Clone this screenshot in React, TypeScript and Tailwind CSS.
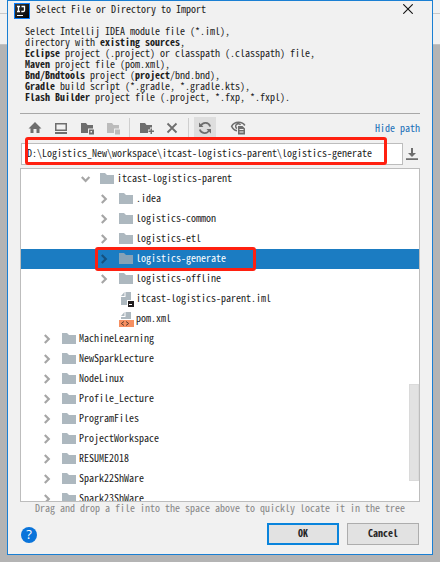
import type { ReactNode } from "react";

function Chevron({ open = false, selected = false }: { open?: boolean; selected?: boolean }) {
  return (
    <svg
      width={open ? 10 : 7}
      height={open ? 7 : 10}
      viewBox={open ? "0 0 10 7" : "0 0 7 10"}
      fill="none"
      stroke={selected ? "#15517f" : "#a6a6a6"}
      strokeWidth="2.2"
      className="shrink-0"
    >
      <path d={open ? "M0.8 1 L4.6 5 L8.4 1" : "M0.8 0.9 L4.8 5 L0.8 9.1"} />
    </svg>
  );
}

function Folder({ selected = false }: { selected?: boolean }) {
  return (
    <svg width="14" height="12" viewBox="0 0 14 12" className="shrink-0">
      <path d="M0 0H5L7 2H14V11H0Z" fill={selected ? "#86a2b7" : "#adb8bf"} />
    </svg>
  );
}

function ModuleFile() {
  return (
    <svg width="15" height="16" viewBox="0 0 15 16" className="shrink-0">
      <path d="M6.5 1H12V14H2V6H6.5Z" fill="#adb8bf" />
      <path d="M5.5 1V5H2Z" fill="#adb8bf" />
      <rect x="8" y="9" width="7" height="7" fill="#fff" />
      <rect x="9" y="10" width="6" height="6" fill="#231f20" />
      <rect x="10" y="13" width="3" height="1" fill="#fff" />
    </svg>
  );
}

function XmlFile() {
  return (
    <svg width="15" height="16" viewBox="0 0 15 16" className="shrink-0">
      <path d="M6.5 1H12V8H2V6H6.5Z" fill="#adb8bf" />
      <path d="M5.5 1V5H2Z" fill="#adb8bf" />
      <rect x="0" y="9" width="15" height="7" fill="#f68f61" />
      <path d="M5 10.5 L2.3 12.5 L5 14.5 M7 10.5 L9.7 12.5 L7 14.5" fill="none" stroke="#5e3b2c" strokeWidth="1" />
    </svg>
  );
}

interface Node {
  name: string;
  level: 1 | 2 | 3;
  kind?: "module" | "xml";
  selected?: boolean;
}

const nodes: Node[] = [
  { name: "itcast-logistics-parent", level: 2 },
  { name: ".idea", level: 3 },
  { name: "logistics-common", level: 3 },
  { name: "logistics-etl", level: 3 },
  { name: "logistics-generate", level: 3, selected: true },
  { name: "logistics-offline", level: 3 },
  { name: "itcast-logistics-parent.iml", level: 3, kind: "module" },
  { name: "pom.xml", level: 3, kind: "xml" },
  { name: "MachineLearning", level: 1 },
  { name: "NewSparkLecture", level: 1 },
  { name: "NodeLinux", level: 1 },
  { name: "Profile_Lecture", level: 1 },
  { name: "ProgramFiles", level: 1 },
  { name: "ProjectWorkspace", level: 1 },
  { name: "RESUME2018", level: 1 },
  { name: "Spark22ShWare", level: 1 },
  { name: "Spark23ShWare", level: 1 },
];

const indent = { 1: "pl-[22px]", 2: "pl-[60px]", 3: "pl-[79px]" };

function TreeRow({ node }: { node: Node }) {
  const sel = !!node.selected;
  return (
    <div
      className={`flex h-5 shrink-0 items-center ${indent[node.level]} ${sel ? "bg-[#1b7cc2] text-white" : "text-[#1c1c1c]"}`}
    >
      <div className="flex w-[19px] shrink-0 items-center">
        {!node.kind && (
          <span className={node.level === 2 ? "" : "pl-px"}>
            <Chevron open={node.level === 2} selected={sel} />
          </span>
        )}
      </div>
      <div className="flex w-[17px] shrink-0 items-center">
        {node.kind === "module" ? <ModuleFile /> : node.kind === "xml" ? <XmlFile /> : <Folder selected={sel} />}
      </div>
      <span className="pb-[3px]">{node.name}</span>
    </div>
  );
}

function Toolbar() {
  return (
    <div className="ml-3 mt-1 flex h-5 w-[400px] items-center">
      <svg width="230" height="20" viewBox="0 0 230 20" className="shrink-0 overflow-visible" fill="#6e6e6e">
        {/* home */}
        <path d="M15 4 L21.5 10.5 H19.5 V15 H16.5 V11 H13.5 V15 H10.5 V10.5 H8.5 Z" />
        {/* desktop */}
        <path d="M35 5H47V13H35Z M36.5 6.5V11.5H45.5V6.5Z M35 14H47V16H35Z" fillRule="evenodd" />
        {/* project directory */}
        <path d="M61 5H66L67.5 7H73V10.5H68V15H61Z" />
        <path d="M69 11.5H74V16.5H69Z M70.5 13V14.5H72V13Z" fillRule="evenodd" />
        {/* module directory */}
        <g fill="#bcbcbc">
          <path d="M87 5H92L93.5 7H99V10.5H94V15H87Z" />
          <path d="M95 11.5H100V16.5H95Z" />
        </g>
        <rect x="109" y="0" width="1" height="19" fill="#cfcfcf" />
        {/* new folder */}
        <path d="M120 5H125L126.5 7H132V9.5H130V11.5H128V15H120Z" />
        <path d="M130.5 10.5H132V12.5H134V14H132V16H130.5V14H128.5V12.5H130.5Z" />
        <path d="M147.5 5.5 L156.5 14.5 M156.5 5.5 L147.5 14.5" fill="none" stroke="#6e6e6e" strokeWidth="1.8" />
        <rect x="168" y="0" width="1" height="19" fill="#cfcfcf" />
        {/* refresh */}
        <rect x="174" y="-1" width="22" height="20" fill="#dedede" />
        <g fill="none" stroke="#6e6e6e" strokeWidth="1.8">
          <path d="M180.8 8 A5 5 0 0 1 190.2 8.5" />
          <path d="M189.2 12 A5 5 0 0 1 179.8 11.5" />
        </g>
        <path d="M179 4.5V9H183.5Z M191 15.5V11H186.5Z" />
        {/* show hidden files */}
        <g transform="translate(9 -0.5)">
          <path d="M215.8 8C213.5 3.8 205.5 3.2 202.6 8.8C204 12 206 13 208 13.2" fill="none" stroke="#6e6e6e" strokeWidth="1.6" />
          <path d="M208 11 A2.6 2.6 0 1 1 211.5 7.4" fill="none" stroke="#6e6e6e" strokeWidth="1.5" />
          <path d="M209 8.5H213.5L216 11V17H209Z M210.5 11.5V12.5H214.5V11.5Z M210.5 14V15H214.5V14Z" fillRule="evenodd" />
        </g>
      </svg>
      <span className="ml-auto pb-[2px] text-[#2070b8]">Hide path</span>
    </div>
  );
}

function DialogButton({ children, primary = false }: { children: ReactNode; primary?: boolean }) {
  return (
    <button
      className={`flex h-[22px] w-[72px] items-center justify-center bg-[#e2e2e2] pb-[3px] font-semibold text-[#262626] ${
        primary ? "border-2 border-[#0a84dc]" : "border border-[#adadad]"
      }`}
    >
      {children}
    </button>
  );
}

export default function App() {
  return (
    <div className="relative h-[562px] w-[440px] overflow-hidden bg-[#b4b4b4] pl-[7px] font-['Noto_Sans_Mono_CJK_SC','Liberation_Mono',monospace] text-[10px] leading-[11px] whitespace-pre text-[#1c1c1c]">
      <div className="absolute inset-x-0 top-0 h-[45px] border-b border-[#c2c2c2] bg-[#f1f1f1]">
        <div className="h-[14px] border-b border-[#c9c9c9]" />
      </div>
      <div className="relative flex h-[555px] w-[426px] flex-col border border-[#1a7fd3] bg-[#f1f1f1]">
        <header className="flex h-[18px] items-center pl-[6px] pr-[19px]">
          <svg width="16" height="16" viewBox="0 0 16 16" className="mt-px">
            <defs>
              <linearGradient id="logo" x1="0" y1="0" x2="1" y2="1">
                <stop offset="0" stopColor="#3a3a3a" />
                <stop offset="1" stopColor="#000" />
              </linearGradient>
            </defs>
            <rect width="16" height="16" fill="#087cfa" />
            <rect x="1" y="1" width="14" height="14" fill="url(#logo)" />
            <path d="M3 3.5H6 M4.5 3.5V8.5 M3 8.5H6 M7.5 3.5H10.5V7.2Q10.5 8.5 9.2 8.5H7.3" fill="none" stroke="#fff" strokeWidth="1.3" />
            <rect x="3" y="12" width="6" height="1" fill="#fff" />
          </svg>
          <span className="ml-[6px] pb-[3px]">Select File or Directory to Import</span>
          <svg width="10" height="10" viewBox="0 0 10 10" className="ml-auto mb-[2px]" fill="none" stroke="#111" strokeWidth="1.1">
            <path d="M0.3 0.3 L9.7 9.7 M9.7 0.3 L0.3 9.7" />
          </svg>
        </header>

        <div className="ml-[17px] mt-[6px] h-[88px]">
          <p>Select Intellij IDEA module file (*.iml),</p>
          <p>directory with <b>existing sources</b>,</p>
          <p><b>Eclipse</b> project (.project) or classpath (.classpath) file,</p>
          <p><b>Maven</b> project file (pom.xml),</p>
          <p><b>Bnd/Bndtools</b> project (<b>project</b>/bnd.bnd),</p>
          <p><b>Gradle</b> build script (*.gradle, *.gradle.kts),</p>
          <p><b>Flash Builder</b> project file (.project, *.fxp, *.fxpl).</p>
        </div>

        <div className="ml-3 h-px w-[400px] bg-[#a8a8a8]" />
        <Toolbar />

        <div className="relative ml-[13px] mt-[5px] flex h-[22px] items-center">
          <div className="flex h-[22px] w-[382px] items-center border border-[#bdbdbd] bg-white pb-[3px] pl-[5px]">
            D:\Logistics_New\workspace\itcast-logistics-parent\logistics-generate
          </div>
          <svg width="12" height="14" viewBox="0 0 12 14" className="ml-[3px]" fill="#6e6e6e">
            <path d="M5 1H7V6H10L6 10L2 6H5Z M0 11.3H12V13H0Z" />
          </svg>
          <div className="absolute -top-[6px] left-[4px] h-[28px] w-[362px] rounded-[3px] border-[3px] border-[#ff2010]" />
        </div>

        <div className="relative ml-3 mt-[3px] flex h-[334px] w-[400px] flex-col border border-[#bdbdbd] bg-white">
          <div className="flex min-h-0 flex-1 flex-col overflow-hidden">
            {nodes.map((n) => (
              <TreeRow key={n.name} node={n} />
            ))}
          </div>
          <div className="absolute right-0 top-[215px] h-[97px] w-[10px] border border-[#dadada] bg-[#e2e2e2]" />
          <div className="absolute left-[74px] top-[78px] h-[24px] w-[161px] rounded-[3px] border-[3px] border-[#ff2010]" />
        </div>

        <p className="ml-[27px] text-[#888888]">
          Drag and drop a file into the space above to quickly locate it in the tree
        </p>

        <footer className="mt-[10px] flex items-center pl-[13px] pr-[13px]">
          <div className="mt-[2px] flex h-4 w-4 items-center justify-center rounded-full bg-[#0a74da] pb-px font-['Open_Sans',sans-serif] text-[13px] leading-none text-white">
            ?
          </div>
          <div className="ml-auto flex gap-2">
            <DialogButton primary>OK</DialogButton>
            <DialogButton>Cancel</DialogButton>
          </div>
        </footer>
      </div>
    </div>
  );
}
